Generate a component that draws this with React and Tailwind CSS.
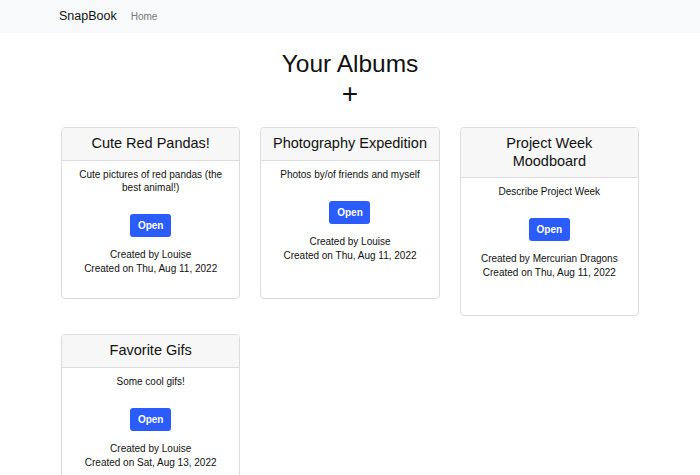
import React from "react";

const albums = [
  { title: "Cute Red Pandas!", desc: "Cute pictures of red pandas (the best animal!)", by: "Louise", on: "Thu, Aug 11, 2022" },
  { title: "Photography Expedition", desc: "Photos by/of friends and myself", by: "Louise", on: "Thu, Aug 11, 2022" },
  { title: "Project Week Moodboard", desc: "Describe Project Week", by: "Mercurian Dragons", on: "Thu, Aug 11, 2022" },
  { title: "Favorite Gifs", desc: "Some cool gifs!", by: "Louise", on: "Sat, Aug 13, 2022" },
];

function Card({ a }) {
  return (
    <div className="border border-[#dcdcdc] rounded-[4px] bg-white overflow-hidden">
      <div className="bg-[#f7f7f7] border-b border-[#dcdcdc] px-[9px] py-[7px] text-center text-[14.5px] leading-[17.5px] text-[#111]">
        {a.title}
      </div>
      <div className="min-h-[137px] px-[12px] pt-[7px] pb-[10px] text-center text-[10px] leading-[13px] text-[#111]">
        <p>{a.desc}</p>
        <div className="mt-[20px] flex justify-center">
          <button className="w-[41px] h-[23px] rounded-[3px] bg-[#2a5cff] text-white text-[10px] font-semibold">Open</button>
        </div>
        <p className="mt-[11px]">Created by {a.by}</p>
        <p className="mt-[1px]">Created on {a.on}</p>
      </div>
    </div>
  );
}

export default function App() {
  return (
    <div className="min-h-[475px] bg-white font-['Liberation_Sans',Arial,sans-serif]">
      <nav className="h-[33px] bg-[#f8f9fa] flex items-center pl-[59px]">
        <span className="text-[12.5px] text-[#111] mr-[14px]">SnapBook</span>
        <span className="text-[10px] text-[#777]">Home</span>
      </nav>
      <main className="pt-[16px]">
        <h1 className="text-center text-[24.5px] leading-[30px] text-[#111]">Your Albums</h1>
        <div className="text-center text-[28px] leading-[30px] text-[#111] font-light">+</div>
        <div className="mt-[18px] mx-auto w-[578px] grid grid-cols-3 gap-x-[20px] gap-y-[18px] items-start">
          {albums.map((a) => (
            <Card key={a.title} a={a} />
          ))}
        </div>
      </main>
    </div>
  );
}
